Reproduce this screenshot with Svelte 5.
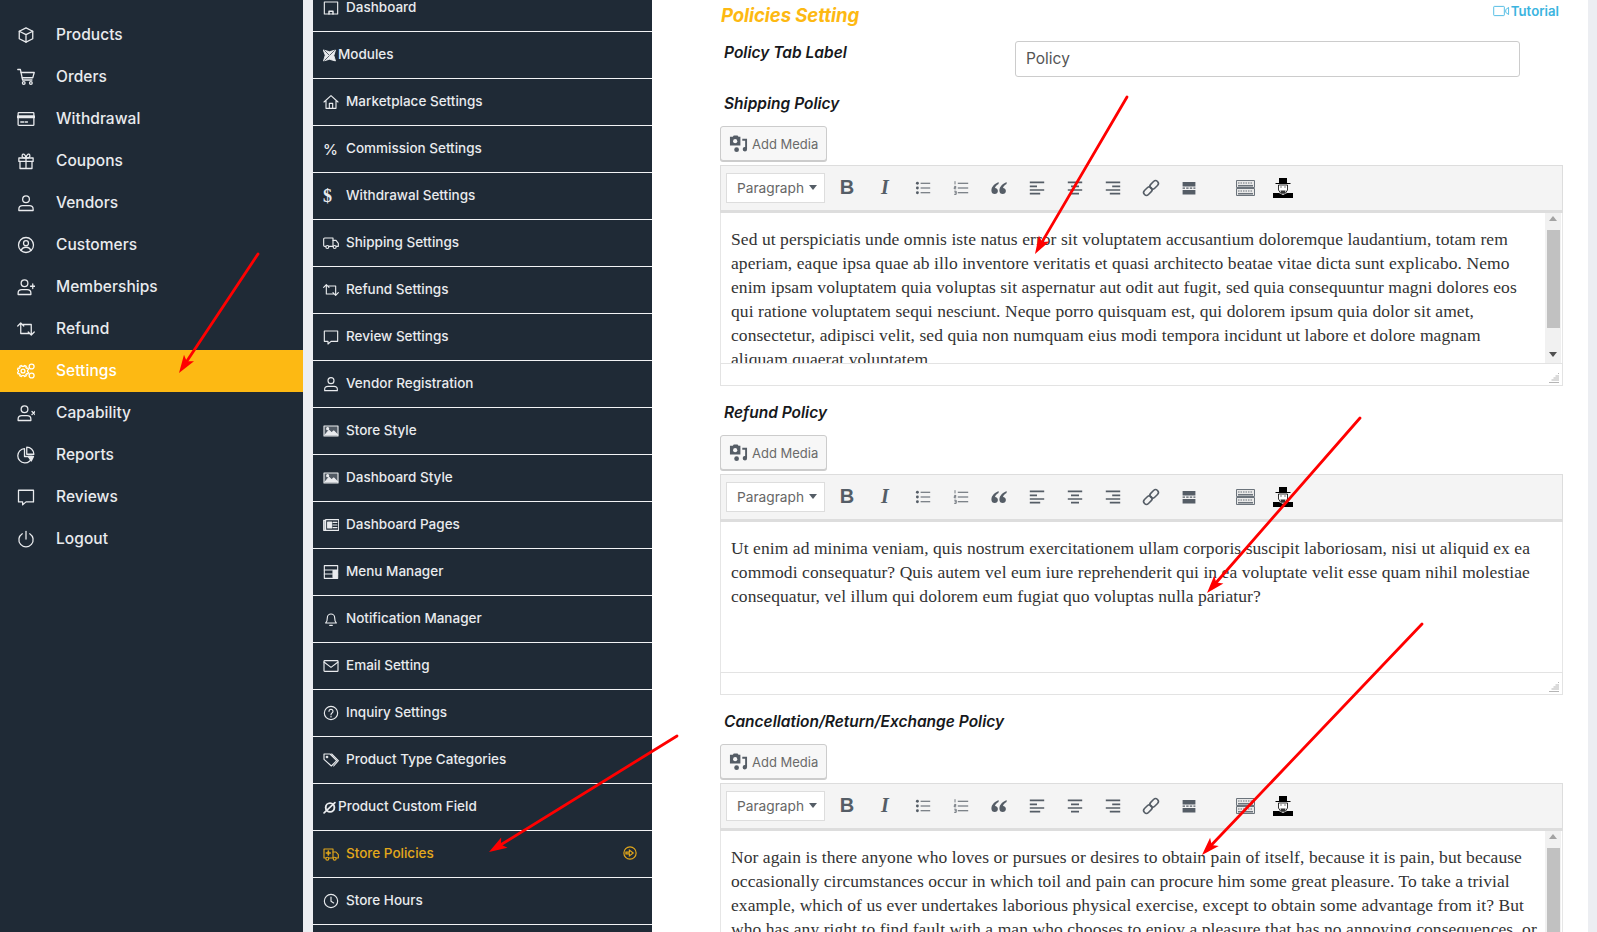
<script>
  const I = {
    box: '<path d="M12 2.500 21 7v10l-9 4.500L3 17V7z"/><path d="M3 7l9 4.500L21 7M12 11.500v10"/>',
    cart: '<path d="M1 2h3.500l3 14h12.500"/><path d="M5.500 6H23l-2 7H7"/><circle cx="9" cy="20" r="1.800"/><circle cx="18.500" cy="20" r="1.800"/>',
    card: '<rect x="1.500" y="3.500" width="21" height="17" rx="1"/><path d="M1.500 9h21" stroke-width="4"/><path d="M5 16h4M11 16h3"/>',
    gift: '<rect x="2.500" y="8" width="19" height="4.500"/><path d="M4 12.500V22h16v-9.500M12 8v14M12 8C8 8 6 6.500 7 4s4-1.500 5 4c1-5.500 4-6.500 5-4s-1 4-5 4z"/>',
    user: '<circle cx="12" cy="7" r="4.500"/><path d="M2.500 22v-2c0-3 2-4.500 5-4.500h9c3 0 5 1.500 5 4.500v2z"/>',
    customer: '<circle cx="12" cy="12" r="10"/><circle cx="12" cy="9.500" r="3.300"/><path d="M5.500 19.500c1-3.500 3-4.500 6.500-4.500s5.500 1 6.500 4.500"/>',
    userplus: '<circle cx="10" cy="7" r="4.500"/><path d="M1.500 22v-2c0-3 2-4.500 5-4.500h7c3 0 5 1.500 5 4.500v2z"/><path d="M21 8v6M18 11h6"/>',
    userx: '<circle cx="10" cy="7" r="4.500"/><path d="M1.500 22v-2c0-3 2-4.500 5-4.500h7c3 0 5 1.500 5 4.500v2z"/><path d="M20 10l4 4M24 10l-4 4"/>',
    refund: '<path d="M1 8l4-4 4 4M5 4.500V18h12M23 16l-4 4-4-4M19 19.500V6H8"/>',
    cogs: '<circle cx="8" cy="12" r="2.600"/><path d="M8 5.500l1.500.4.900-1.300 2 1.200-.6 1.500 1.200 1.200 1.500-.5 1 2.100-1.400.9v2l1.400.9-1 2.100-1.500-.5-1.200 1.200.6 1.500-2 1.200-.9-1.300-3 0-.9 1.300-2-1.200.6-1.500-1.200-1.200-1.500.5-1-2.100 1.400-.9v-2l-1.400-.9 1-2.100 1.500.5 1.200-1.200-.6-1.500 2-1.200.9 1.300z"/><circle cx="19.500" cy="6" r="3.300"/><circle cx="19.500" cy="18" r="3.300"/>',
    pie: '<path d="M10 3.500a9.500 9.500 0 1 0 10 10.500H10z"/><path d="M13 1.500v9.500h9.500a9.500 9.500 0 0 0-9.500-9.500z"/><path d="M15 14h7l-3 6z" fill="currentColor"/>',
    comment: '<path d="M2 3h20v15.500H12L7.500 22.500v-4H2z"/>',
    power: '<path d="M12 2v10"/><path d="M7 5a9.500 9.500 0 1 0 10 0"/>',
    monitor: '<path d="M2 3h20v18H2z"/><path d="M9 21v-4h6v4" stroke-width="2.200"/>',
    modules: '<path d="M1 2l11 3 11-3-3 10 3 10-11-3-11 3 3-10z" fill="currentColor"/><path d="M3 3l8 8M21 3l-8 8M3 21l8-8" stroke="#1f2a36" stroke-width="1.300"/>',
    home: '<path d="M1.500 12 12 2.500 22.500 12M4.500 10v11.500h15V10"/><path d="M9.500 21.500V14h5v7.500"/>',
    truck: '<path d="M15 17H9M4 17H2.500a1.500 1.500 0 0 1-1.500-1.500V6a1.500 1.500 0 0 1 1.500-1.500H15V17"/><path d="M15 8h4.500l3.500 4.500V17h-3"/><circle cx="6.500" cy="18" r="2.200"/><circle cx="17.500" cy="18" r="2.200"/>',
    image: '<rect x="1.500" y="4.500" width="21" height="15" fill="currentColor" fill-opacity=".25"/><path d="M3 18l6-7 4 4 3-3 6 6z" fill="currentColor"/><circle cx="7" cy="8.500" r="1.500" fill="currentColor"/>',
    pages: '<path d="M1 5h2v15H1zM4 4h19.500v16H4z"/><path d="M7 7.500h6v9H7z" fill="currentColor"/><path d="M15 8h6M15 12h6M15 16h6"/>',
    menu: '<rect x="2" y="2.500" width="20" height="19"/><path d="M2 9h20M2 15h20"/><path d="M15 10h6v4h-6zM15 16h6v4h-6z" fill="currentColor"/>',
    bell: '<path d="M4 18c2-2 2.500-4 2.500-8a5.500 5.500 0 0 1 11 0c0 4 .5 6 2.500 8z"/><path d="M10 21.500h4"/>',
    mail: '<rect x="1.500" y="4" width="21" height="16" rx="1"/><path d="M1.500 6 12 14 22.500 6"/>',
    help: '<circle cx="12" cy="12" r="10"/><path d="M9 9.500a3 3 0 1 1 4.500 2.600c-1 .6-1.500 1.200-1.500 2.400M12 17v1"/>',
    tags: '<path d="M1.500 3h9l10 10-8 8-11-10z"/><path d="M13 3l10 10-7 8"/><circle cx="6" cy="7.500" r="1.200"/>',
    custom: '<circle cx="13" cy="12" r="8" stroke-width="3.500"/><path d="M22 3 2 22" stroke-width="3"/>',
    ambulance: '<path d="M15 18H9M4 18H1.500V4.500H15V18"/><path d="M15 9h4.500L23 13v5h-3"/><circle cx="6.500" cy="19" r="2.200"/><circle cx="17.500" cy="19" r="2.200"/><path d="M8 7.500v6M5 10.500h6" stroke-width="2.500"/>',
    clock: '<circle cx="12" cy="12" r="10"/><path d="M12 6v6.500l4 2.500"/>'
  };

  const sideItems = [
    ['box', 'Products'], ['cart', 'Orders'], ['card', 'Withdrawal'], ['gift', 'Coupons'],
    ['user', 'Vendors'], ['customer', 'Customers'], ['userplus', 'Memberships'], ['refund', 'Refund'],
    ['cogs', 'Settings', true], ['userx', 'Capability'], ['pie', 'Reports'], ['comment', 'Reviews'], ['power', 'Logout']
  ];

  const subItems = [
    { i: 'monitor', t: 'Dashboard' }, { i: 'modules', t: 'Modules', narrow: true },
    { i: 'home', t: 'Marketplace Settings' }, { g: '%', t: 'Commission Settings' },
    { g: '$', t: 'Withdrawal Settings', serif: true }, { i: 'truck', t: 'Shipping Settings' },
    { i: 'refund', t: 'Refund Settings' }, { i: 'comment', t: 'Review Settings' },
    { i: 'user', t: 'Vendor Registration' }, { i: 'image', t: 'Store Style' },
    { i: 'image', t: 'Dashboard Style' }, { i: 'pages', t: 'Dashboard Pages' },
    { i: 'menu', t: 'Menu Manager' }, { i: 'bell', t: 'Notification Manager' },
    { i: 'mail', t: 'Email Setting' }, { i: 'help', t: 'Inquiry Settings' },
    { i: 'tags', t: 'Product Type Categories' }, { i: 'custom', t: 'Product Custom Field', narrow: true },
    { i: 'ambulance', t: 'Store Policies', active: true }, { i: 'clock', t: 'Store Hours' }, { t: '' }
  ];

  const sections = [
    { label: 'Shipping Policy', thumb: [17, 98], lines: [
      'Sed ut perspiciatis unde omnis iste natus error sit voluptatem accusantium doloremque laudantium, totam rem',
      'aperiam, eaque ipsa quae ab illo inventore veritatis et quasi architecto beatae vitae dicta sunt explicabo. Nemo',
      'enim ipsam voluptatem quia voluptas sit aspernatur aut odit aut fugit, sed quia consequuntur magni dolores eos',
      'qui ratione voluptatem sequi nesciunt. Neque porro quisquam est, qui dolorem ipsum quia dolor sit amet,',
      'consectetur, adipisci velit, sed quia non numquam eius modi tempora incidunt ut labore et dolore magnam',
      'aliquam quaerat voluptatem.'] },
    { label: 'Refund Policy', lines: [
      'Ut enim ad minima veniam, quis nostrum exercitationem ullam corporis suscipit laboriosam, nisi ut aliquid ex ea',
      'commodi consequatur? Quis autem vel eum iure reprehenderit qui in ea voluptate velit esse quam nihil molestiae',
      'consequatur, vel illum qui dolorem eum fugiat quo voluptas nulla pariatur?'] },
    { label: 'Cancellation/Return/Exchange Policy', thumb: [17, 110], lines: [
      'Nor again is there anyone who loves or pursues or desires to obtain pain of itself, because it is pain, but because',
      'occasionally circumstances occur in which toil and pain can procure him some great pleasure. To take a trivial',
      'example, which of us ever undertakes laborious physical exercise, except to obtain some advantage from it? But',
      'who has any right to find fault with a man who chooses to enjoy a pleasure that has no annoying consequences, or'] }
  ];

  const arrows = [
    [1127, 97, 1035, 254], [1360, 418, 1207, 593], [1422, 624, 1202, 855],
    [258, 254, 179, 373], [677, 736, 489, 852]
  ].map(([x1, y1, x2, y2]) => {
    const l = Math.hypot(x2 - x1, y2 - y1), ux = (x2 - x1) / l, uy = (y2 - y1) / l;
    const p = (b, s) => `${(x2 - ux * b - uy * s).toFixed(1)},${(y2 - uy * b + ux * s).toFixed(1)}`;
    return { x1, y1, x2: x2 - ux * 12, y2: y2 - uy * 12, head: `${x2},${y2} ${p(18, 6)} ${p(14, 0)} ${p(18, -6)}` };
  });

  const tools = [
    { g: 'B', c: 'bold' }, { g: 'I', c: 'ital' }, { s: 'ul' }, { s: 'ol' }, { s: 'quote' },
    { s: 'al' }, { s: 'ac' }, { s: 'ar' }, { s: 'link' }, { s: 'more' }
  ];
</script>

{#snippet icon(name, cls)}
  <svg class={cls} viewBox="0 0 24 24" fill="none" stroke="currentColor" stroke-width="1.700" stroke-linejoin="round" stroke-linecap="round">{@html I[name]}</svg>
{/snippet}

{#snippet toolIcon(s)}
  <svg class="ticon" viewBox="0 0 20 20" fill="none" stroke="#555d66" stroke-width="2">
    {#if s === 'ul'}
      <g stroke-width="1.300"><path d="M7 4h12M7 10h12M7 16h12"/></g>
      <g fill="#555d66" stroke="none"><circle cx="3" cy="4" r="1.800"/><circle cx="3" cy="10" r="1.800"/><circle cx="3" cy="16" r="1.800"/></g>
    {:else if s === 'ol'}
      <g stroke-width="1.300"><path d="M6 4h13M6 10h13M6 16h13"/></g>
      <g stroke-width="1"><path d="M2.500 1.500v4M1.500 8h2v1.500h-2V11h2.500M1.500 14h2.500v4h-2.500M2 16h2"/></g>
    {:else if s === 'quote'}
      <path fill="#555d66" stroke="none" d="M9.500 2.500C5 4.500 .5 8 .5 13c0 2.800 1.700 4.500 4.200 4.500 2.200 0 3.900-1.600 3.900-3.800 0-2.200-1.500-3.700-3.600-3.800.4-2 2.300-3.800 4.500-5zM19.500 2.500c-4.500 2-9 5.500-9 10.500 0 2.800 1.700 4.500 4.200 4.500 2.200 0 3.900-1.600 3.900-3.800 0-2.200-1.500-3.700-3.600-3.800.4-2 2.300-3.800 4.500-5z"/>
    {:else if s === 'al'}
      <path d="M1 3h18M1 8h9M1 12.500h18M1 17h13"/>
    {:else if s === 'ac'}
      <path d="M1 3h18M5 8h10M1 12.500h18M5 17h10"/>
    {:else if s === 'ar'}
      <path d="M1 3h18M9 8h10M1 12.500h18M6 17h13"/>
    {:else if s === 'link'}
      <g stroke-width="2" transform="rotate(-45 10 10)"><rect x="-1.500" y="6.500" width="12" height="7" rx="3.500"/><rect x="9.500" y="6.500" width="12" height="7" rx="3.500"/></g>
    {:else if s === 'more'}
      <path fill="#555d66" stroke="none" d="M2 2.500h16v5.500H2zM2 12.500h16V18H2z"/>
      <path stroke-width="1.500" stroke-dasharray="3 1.500" d="M2 10.200h16"/>
    {/if}
  </svg>
{/snippet}

<div class="page">
  <aside class="side">
    {#each sideItems as [ic, t, on]}
      <div class="side-row" class:on>
        {@render icon(ic, 'side-ico')}
        <span class="tx">{t}</span>
      </div>
    {/each}
  </aside>

  <nav class="sub">
    {#each subItems as it}
      <div class="sub-row" class:active={it.active}>
        <span class="slot" class:narrow={it.narrow}>
          {#if it.i}{@render icon(it.i, 'sub-ico')}{/if}
          {#if it.g}<span class="glyph" class:serif={it.serif}>{it.g}</span>{/if}
        </span>
        <span class="tx">{it.t}</span>
        {#if it.active}
          <svg class="go" viewBox="0 0 24 24" fill="none" stroke="currentColor" stroke-width="2"><circle cx="12" cy="12" r="10.500"/><path d="M5 10.500h6V7l6.500 5-6.500 5v-3.500H5z" /></svg>
        {/if}
      </div>
    {/each}
  </nav>

  <main class="main">
    <div class="head">
      <h2>Policies Setting</h2>
      <a class="tut">
        <svg viewBox="0 0 24 16" fill="none" stroke="currentColor" stroke-width="1.200"><rect x="1" y="1.500" width="15" height="13" rx="1"/><path d="M18 6l4-3v10l-4-3z"/></svg>
        Tutorial
      </a>
    </div>

    <div class="tabrow">
      <div class="lbl tablbl">Policy Tab Label</div>
      <div class="inp">Policy</div>
    </div>

    {#each sections as s}
      <section class="sec">
        <div class="lbl">{s.label}</div>
        <button class="media">
          <svg viewBox="0 0 20 20" fill="#555d66"><path d="M1 3h3l1-1.500h4L10 3h2v9H1z"/><circle cx="6.500" cy="7.500" r="2.200" fill="#f7f7f7"/><path d="M14 5h5v11a2.300 2.300 0 1 1-2-2.200V7h-3z"/><circle cx="8" cy="16.500" r="2.500"/></svg>
          Add Media
        </button>
        <div class="tb">
          <div class="fmt">Paragraph<i></i></div>
          {#each tools as t}
            <span class="tool">
              {#if t.g}<span class={t.c}>{t.g}</span>{:else}{@render toolIcon(t.s)}{/if}
            </span>
          {/each}
          <span class="spacer"></span>
          <span class="tool">
            <svg class="sink" viewBox="0 0 19 16"><path fill="#e8e8e8" stroke="#6b737b" d="M.5 .5h18v7H.5zM.5 8.500h18v7H.5z"/><path stroke="#6b737b" stroke-dasharray="1.500 1" d="M2 3h15M2 11h15"/><path fill="#6b737b" d="M2 5h15v1.500H2zM2 13h15v1.500H2z"/></svg>
          </span>
          <span class="tool">
            <svg class="spy" viewBox="0 0 20 20"><path d="M6 0h8v5h3.500v1h-15V5H6zM0 15h6l4 2 4-2h6v5H0z" fill="#000"/><path d="M5.500 7h9v5l-2 3h-5l-2-3z" fill="#fff" stroke="#000" stroke-width=".8"/><path d="M7.500 12.500h5L12 15.500H8z" fill="#333"/><path d="M7.500 9h1M11.500 9h1" stroke="#000"/></svg>
          </span>
        </div>
        <div class="body">
          {#each s.lines as l}<div class="line">{l}</div>{/each}
          {#if s.thumb}
            <div class="bar">
              <b class="up"></b>
              <em style="top:{s.thumb[0]}px;height:{s.thumb[1]}px"></em>
              <b class="down"></b>
            </div>
          {/if}
        </div>
        <div class="status">
          <svg viewBox="0 0 10 10" stroke="#b5b5b5"><path d="M9 .5h1M6.500 3h3.500M4.500 5h5.500M2.500 7h7.500M0 9.500h10"/></svg>
        </div>
      </section>
    {/each}
  </main>
</div>

<svg class="arrows" viewBox="0 0 1597 932">
  {#each arrows as a}
    <line x1={a.x1} y1={a.y1} x2={a.x2} y2={a.y2} stroke="#f00" stroke-width="2.800" stroke-linecap="round" />
    <polygon points={a.head} fill="#f00" />
  {/each}
</svg>

<style>
  :global(body) { margin: 0; overflow: hidden; background: #eceef2; }
  * { box-sizing: border-box; }
  .page {
    display: flex; width: 1597px; height: 932px; overflow: hidden; background: #eceef2;
    font-family: Inter, "Open Sans", sans-serif;
  }
  .side { width: 303px; flex: none; background: #1f2a36; padding-top: 14px; margin-right: 10px; color: #e9ebee; }
  .side-row { display: flex; align-items: center; height: 42px; padding-left: 17px; font-size: 15.500px; font-weight: 500; letter-spacing: .05px; }
  .tx { padding-bottom: 2px; }
  .side-row.on { background: #fdb913; color: #fff; }
  .side-ico { width: 18px; height: 18px; margin-right: 21px; flex: none; }
  .sub { width: 339px; flex: none; margin-top: -15px; align-self: flex-start; color: #e9ebee; }
  .sub-row {
    display: flex; align-items: center; height: 47px; background: #1f2a36; border-bottom: 1.500px solid #f2f3f5;
    padding-left: 10px; font-size: 13.500px; font-weight: 500; position: relative;
  }
  .sub-row.active { color: #e3a81b; }
  .slot { width: 23px; flex: none; display: flex; align-items: center; }
  .slot.narrow { width: 15px; }
  .sub-ico { width: 16px; height: 16px; }
  .narrow .sub-ico { width: 13px; height: 13px; }
  .glyph { font-size: 15px; font-weight: 500; }
  .glyph.serif { font-family: "Liberation Serif", serif; font-weight: 700; font-size: 18px; }
  .go { position: absolute; right: 15px; top: 15px; width: 14px; height: 14px; }
  .main { width: 936px; flex: none; background: #fff; padding: 4px 25px 0 68px; }
  .head { display: flex; justify-content: space-between; align-items: center; height: 22px; padding-right: 4px; }
  h2 { margin: 0 0 0 1px; font-size: 18.600px; font-weight: 700; font-style: italic; color: #fdb913; letter-spacing: -.1px; }
  .tut { display: flex; align-items: center; gap: 1px; color: #3bb4e0; font-size: 13.200px; font-weight: 600; margin-top: -8px; }
  .tut svg { width: 17px; height: 12px; }
  .tabrow { display: flex; margin-top: 15px; padding-left: 4px; height: 36px; }
  .lbl { font-size: 15.500px; font-weight: 600; font-style: italic; color: #17191c; line-height: 24px; height: 24px; }
  .tablbl { width: 291px; flex: none; }
  .inp {
    width: 505px; height: 36px; border: 1px solid #ccc; border-radius: 3px; padding-left: 10px;
    font-size: 15.500px; color: #555; line-height: 34px;
  }
  .sec { margin-top: 14px; padding-bottom: 0; }
  .sec > .lbl { padding-left: 4px; padding-top: 1px; }
  .media {
    display: flex; align-items: center; gap: 4px; width: 107px; height: 35px; margin: 11px 0 4px; padding: 0 0 0 8px;
    border: 1px solid #ccc; border-radius: 3px; background: #f7f7f7; box-shadow: 0 1px 0 #ccc;
    font: 400 13px Inter, sans-serif; color: #6a6a6a; white-space: nowrap;
  }
  .media svg { width: 19px; height: 19px; flex: none; }
  .tb {
    display: flex; align-items: center; height: 48px; padding: 0 0 1px 5px;
    border: 1px solid #ddd; border-bottom: 3px solid #ddd; background: #f4f4f4;
  }
  .fmt {
    width: 99px; height: 30px; flex: none; margin-right: 3px; background: #fff; border: 1px solid #ddd;
    display: flex; align-items: center; gap: 5px; padding: 0 0 0 10px;
    font-size: 13.700px; color: #666;
  }
  .fmt i { width: 0; height: 0; border: 4px solid transparent; border-top: 5px solid #555d66; border-bottom: 0; }
  .tool { width: 38px; flex: none; display: flex; justify-content: center; align-items: center; color: #555d66; }
  .bold { font: 700 20px "Liberation Sans", sans-serif; }
  .ital { font: italic 700 20px "Liberation Serif", serif; }
  .ticon { width: 16px; height: 16px; display: block; overflow: visible; }
  .sink { width: 19px; height: 16px; display: block; }
  .spacer { width: 18px; flex: none; }
  .spy { width: 20px; height: 20px; display: block; }
  .body {
    position: relative; height: 150px; overflow: hidden; padding: 14px 0 0 10px;
    border-left: 1px solid #e6e6e6; border-right: 1px solid #e6e6e6; background: #fff;
  }
  .line { font: 17.500px/24px "Liberation Serif", serif; letter-spacing: .07px; color: #333; white-space: nowrap; }
  .bar { position: absolute; right: 1px; top: 0; width: 16px; height: 100%; background: #f1f1f1; }
  .bar em { position: absolute; left: 2px; width: 13px; background: #c1c1c1; }
  .bar b { position: absolute; left: 4px; width: 0; height: 0; border: 4px solid transparent; }
  .up { top: 3px; border-bottom: 5px solid #a3a3a3 !important; border-top: 0 !important; }
  .down { bottom: 6px; border-top: 5px solid #505050 !important; border-bottom: 0 !important; }
  .status { height: 23px; border: 1px solid #e3e3e3; position: relative; background: #fff; }
  .status svg { position: absolute; right: 3px; bottom: 2px; width: 10px; height: 10px; }
  .arrows { position: absolute; left: 0; top: 0; width: 1597px; height: 932px; pointer-events: none; }
</style>
